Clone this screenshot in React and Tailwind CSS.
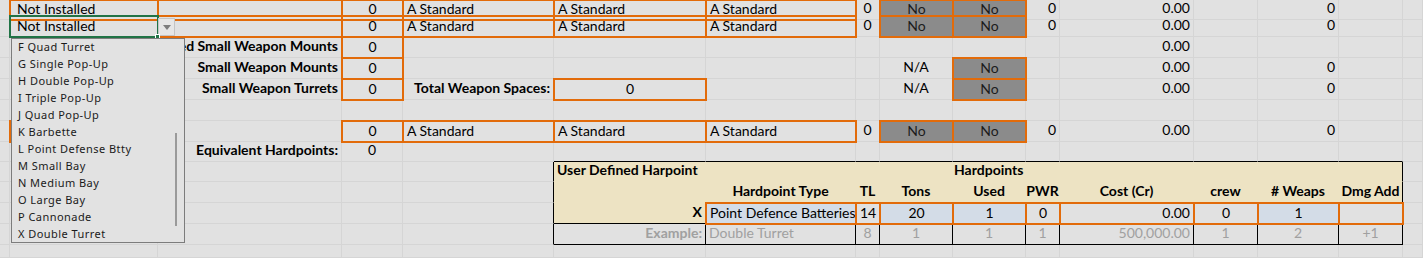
import React from "react";

const COLS =
  "grid grid-cols-[10px_148px_184px_61px_151px_152px_150px_24px_73px_73px_34px_134px_64px_81px_64px_20px]";

const NI = "Not Installed";
const AS = "A Standard";

// one entry per spreadsheet row; cells keyed by column index (0 = A)
const topRow = (sel) => ({
  1: { t: NI, k: sel ? "sel" : "box", a: "L" },
  2: { k: "box" },
  3: { t: "0", k: "box", a: "c" },
  4: { t: AS, k: "box" },
  5: { t: AS, k: "box" },
  6: { t: AS, k: "box" },
  7: { t: "0", a: "c" },
  8: { t: "No", k: "no", a: "c" },
  9: { t: "No", k: "no", a: "c" },
  10: { t: "0", a: "r" },
  11: { t: "0.00", a: "r" },
  13: { t: "0", a: "r" },
});

const beigeRow = (extra) => {
  const r = {};
  for (let c = 5; c <= 14; c++) r[c] = { k: "beige", br: c === 14 };
  r[4] = { br: true };
  return { ...r, ...extra };
};

const ROWS = [
  { h: "h-[16px]", cells: topRow(false) },
  { h: "h-[21px]", cells: topRow(true) },
  {
    h: "h-[21px]",
    cells: {
      2: { t: "Installed Small Weapon Mounts", a: "r", b: true, z: true },
      3: { t: "0", k: "box", a: "c" },
      11: { t: "0.00", a: "r" },
    },
  },
  {
    h: "h-[21px]",
    cells: {
      2: { t: "Small Weapon Mounts", a: "r", b: true },
      3: { t: "0", k: "box", a: "c" },
      8: { t: "N/A", a: "c" },
      9: { t: "No", k: "no", a: "c" },
      11: { t: "0.00", a: "r" },
      13: { t: "0", a: "r" },
    },
  },
  {
    h: "h-[21px]",
    cells: {
      2: { t: "Small Weapon Turrets", a: "r", b: true },
      3: { t: "0", k: "box", a: "c" },
      4: { t: "Total Weapon Spaces:", a: "r", b: true },
      5: { t: "0", k: "box", a: "c" },
      8: { t: "N/A", a: "c" },
      9: { t: "No", k: "no", a: "c" },
      11: { t: "0.00", a: "r" },
      13: { t: "0", a: "r" },
    },
  },
  { h: "h-[21px]", cells: {} },
  {
    h: "h-[21px]",
    cells: {
      // value hidden behind the open list
      1: { k: "box", a: "L" },
      3: { t: "0", k: "box", a: "c" },
      4: { t: AS, k: "box" },
      5: { t: AS, k: "box" },
      6: { t: AS, k: "box" },
      7: { t: "0", a: "c" },
      8: { t: "No", k: "no", a: "c" },
      9: { t: "No", k: "no", a: "c" },
      10: { t: "0", a: "r" },
      11: { t: "0.00", a: "r" },
      13: { t: "0", a: "r" },
    },
  },
  {
    h: "h-[20px]",
    cells: {
      2: { t: "Equivalent Hardpoints:", a: "r", b: true },
      3: { t: "0", a: "c" },
      5: { bb: true }, 6: { bb: true }, 7: { bb: true }, 8: { bb: true }, 9: { bb: true },
      10: { bb: true }, 11: { bb: true }, 12: { bb: true }, 13: { bb: true }, 14: { bb: true },
    },
  },
  {
    h: "h-[20px]",
    cells: beigeRow({
      5: { t: "User Defined Harpoint", k: "beige", b: true, z: true },
      9: { t: "Hardpoints", k: "beige", b: true, z: true, a: "t" },
    }),
  },
  {
    h: "h-[21px]",
    cells: beigeRow({
      6: { t: "Hardpoint Type", k: "beige", b: true, a: "c" },
      7: { t: "TL", k: "beige", b: true, a: "c" },
      8: { t: "Tons", k: "beige", b: true, a: "c" },
      9: { t: "Used", k: "beige", b: true, a: "c" },
      10: { t: "PWR", k: "beige", b: true, a: "c" },
      11: { t: "Cost (Cr)", k: "beige", b: true, a: "c" },
      12: { t: "crew", k: "beige", b: true, a: "c" },
      13: { t: "# Weaps", k: "beige", b: true, a: "c" },
      14: { t: "Dmg Add", k: "beige", b: true, a: "c", br: true },
    }),
  },
  {
    h: "h-[21px]",
    cells: {
      4: { br: true },
      5: { t: "X", k: "beige", b: true, a: "r", bb: true },
      6: { t: "Point Defence Batteries", k: "blue" },
      7: { t: "14", k: "box", a: "c" },
      8: { t: "20", k: "blue", a: "c" },
      9: { t: "1", k: "blue", a: "c" },
      10: { t: "0", k: "box", a: "c" },
      11: { t: "0.00", k: "box", a: "r" },
      12: { t: "0", k: "box", a: "c" },
      13: { t: "1", k: "blue", a: "c" },
      14: { k: "box" },
    },
  },
  {
    h: "h-[21px]",
    cells: {
      4: { br: true },
      5: { t: "Example:", k: "ex", b: true, a: "r" },
      6: { t: "Double Turret", k: "ex" },
      7: { t: "8", k: "ex", a: "c" },
      8: { t: "1", k: "ex", a: "c" },
      9: { t: "1", k: "ex", a: "c" },
      10: { t: "1", k: "ex", a: "c" },
      11: { t: "500,000.00", k: "ex", a: "r" },
      12: { t: "1", k: "ex", a: "c" },
      13: { t: "2", k: "ex", a: "c" },
      14: { t: "+1", k: "ex", a: "c" },
    },
  },
  { h: "h-[13px]", cells: {} },
];

const ALIGN = {
  l: "justify-start pl-[3px]",
  L: "justify-start pl-[6px]",
  t: "justify-start pl-px",
  c: "justify-center",
  r: "justify-end pr-[3px]",
};

function cellClass(s) {
  const parts = ["flex items-end whitespace-nowrap leading-[16px]", ALIGN[s.a || "l"]];
  if (s.b) parts.push("font-bold");
  if (s.z) parts.push("relative z-[5]");

  if (s.k === "box" || s.k === "no" || s.k === "blue") {
    parts.push("relative z-10 -m-px border-2 border-[#e26b0a] pb-[2px]");
    if (s.k === "no") parts.push("bg-[#8b8b8b] text-[#1c1c1c]");
    if (s.k === "blue") parts.push("bg-[#d3dce7]");
  } else if (s.k === "sel") {
    parts.push("relative z-20 -m-px border-2 border-[#217346] pb-[2px]");
  } else {
    parts.push("border-r border-b pb-[3px]");
    if (s.k === "ex") {
      parts.push("border-r-black border-b-black text-[#a0a0a0]");
    } else {
      if (s.k === "beige") parts.push("bg-[#ede3c3]");
      if (s.br) parts.push("border-r-black");
      else if (s.k === "beige") parts.push("border-r-[#ede3c3]");
      else parts.push("border-r-[#d5d5d5]");
      if (s.bb) parts.push("border-b-black");
      else if (s.k === "beige") parts.push("border-b-[#ede3c3]");
      else parts.push("border-b-[#d5d5d5]");
    }
  }
  return parts.join(" ");
}

function Cell({ s }) {
  return (
    <div className={cellClass(s)}>
      {s.t}
      {s.k === "sel" && (
        <>
          <div className="absolute left-full top-[1px] ml-px w-[17px] h-[18px] border border-[#c4c4c4] bg-[#e6e6e6] flex items-center justify-center">
            <svg width="8" height="5" viewBox="0 0 8 5">
              <path d="M0 0 H8 L4 5 Z" fill="#7d7d7d" />
            </svg>
          </div>
          <div className="absolute -right-[3px] -bottom-[3px] w-[5px] h-[5px] bg-[#217346] border border-white" />
        </>
      )}
    </div>
  );
}

const OPTIONS = [
  "F Quad Turret",
  "G Single Pop-Up",
  "H Double Pop-Up",
  "I Triple Pop-Up",
  "J Quad Pop-Up",
  "K Barbette",
  "L Point Defense Btty",
  "M Small Bay",
  "N Medium Bay",
  "O Large Bay",
  "P Cannonade",
  "X Double Turret",
];

export default function App() {
  return (
    <div className="relative w-[1423px] h-[258px] overflow-hidden bg-[#e1e1e1] text-black text-[14px] font-['Lato',sans-serif]">
      {ROWS.map((row, r) => (
        <div key={r} className={`${COLS} ${row.h}`}>
          {Array.from({ length: 16 }, (_, c) => (
            <Cell key={c} s={row.cells[c] || {}} />
          ))}
        </div>
      ))}

      {/* validation dropdown list */}
      <div className="absolute left-[11px] top-[38px] z-30 w-[174px] h-[205px] border border-[#7c7c7c] bg-[#e2e2e2] text-[11px] tracking-[0.45px] text-[#1a1a1a] font-['Noto_Sans',sans-serif]">
        {OPTIONS.map((o) => (
          <div key={o} className="h-[17px] flex items-center pl-[6px] whitespace-nowrap">
            {o}
          </div>
        ))}
        <div className="absolute left-[163px] top-[94px] w-[2px] h-[93px] bg-[#9a9a9a]" />
      </div>
    </div>
  );
}
